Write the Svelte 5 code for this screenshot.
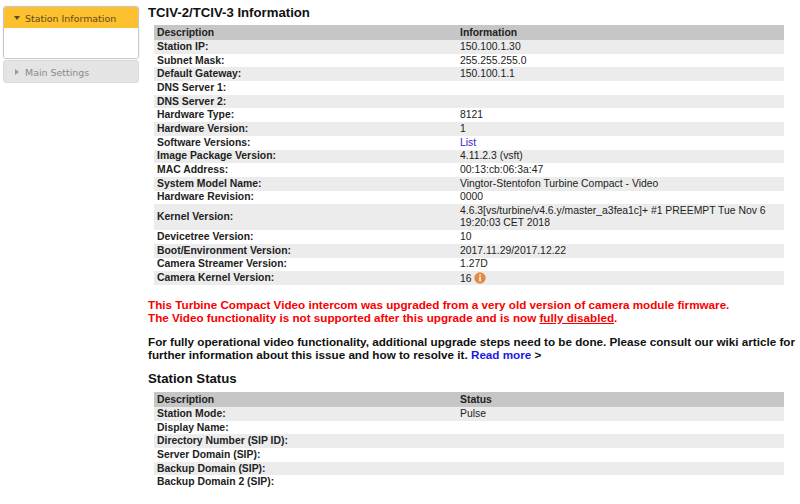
<script>
  const info = [
    ['Station IP:', '150.100.1.30'],
    ['Subnet Mask:', '255.255.255.0'],
    ['Default Gateway:', '150.100.1.1'],
    ['DNS Server 1:', ''],
    ['DNS Server 2:', ''],
    ['Hardware Type:', '8121'],
    ['Hardware Version:', '1'],
    ['Software Versions:', 'List'],
    ['Image Package Version:', '4.11.2.3 (vsft)'],
    ['MAC Address:', '00:13:cb:06:3a:47'],
    ['System Model Name:', 'Vingtor-Stentofon Turbine Compact - Video'],
    ['Hardware Revision:', '0000'],
    ['Kernel Version:', '4.6.3[vs/turbine/v4.6.y/master_a3fea1c]+ #1 PREEMPT Tue Nov 6 19:20:03 CET 2018'],
    ['Devicetree Version:', '10'],
    ['Boot/Environment Version:', '2017.11.29/2017.12.22'],
    ['Camera Streamer Version:', '1.27D'],
    ['Camera Kernel Version:', '16']
  ];
  const status = [
    ['Station Mode:', 'Pulse'],
    ['Display Name:', ''],
    ['Directory Number (SIP ID):', ''],
    ['Server Domain (SIP):', ''],
    ['Backup Domain (SIP):', ''],
    ['Backup Domain 2 (SIP):', '']
  ];
</script>

<div class="page">
  <aside class="side">
    <div class="panel">
      <div class="head active"><span class="tri down"></span>Station Information</div>
      <div class="body"></div>
    </div>
    <div class="head closed"><span class="tri right"></span>Main Settings</div>
  </aside>
  <main class="main">
    <h2>TCIV-2/TCIV-3 Information</h2>
    <table>
      <thead><tr><th class="c1">Description</th><th>Information</th></tr></thead>
      <tbody>
        {#each info as [k, v]}
          <tr>
            <td class="k">{k}</td>
            <td>
              {#if v === 'List'}<a href="#list" class="list">List</a>
              {:else}{v}{/if}
              {#if k === 'Camera Kernel Version:'}
                <svg class="warn" width="12" height="12" viewBox="0 0 12 12">
                  <circle cx="6" cy="6" r="5.7" fill="#e08a45"/>
                  <rect x="5.3" y="2.3" width="1.5" height="1.5" fill="#fff"/>
                  <rect x="5.3" y="4.8" width="1.5" height="4.6" fill="#fff"/>
                </svg>
              {/if}
            </td>
          </tr>
        {/each}
      </tbody>
    </table>
    <p class="alert">This Turbine Compact Video intercom was upgraded from a very old version of camera module firmware.<br>The Video functionality is not supported after this upgrade and is now <u>fully disabled</u>.</p>
    <p class="note">For fully operational video functionality, additional upgrade steps need to be done. Please consult our wiki article for further information about this issue and how to resolve it. <a href="#more">Read more</a> &gt;</p>
    <h2 class="h2b">Station Status</h2>
    <table>
      <thead><tr><th class="c1">Description</th><th>Status</th></tr></thead>
      <tbody>
        {#each status as [k, v]}
          <tr><td class="k">{k}</td><td>{v}</td></tr>
        {/each}
      </tbody>
    </table>
  </main>
</div>

<style>
  :global(body) { margin: 0; background: #fff; overflow: hidden; }
  .page {
    display: flex;
    width: 800px;
    height: 504px;
    overflow: hidden;
    font-family: "Liberation Sans", Arial, sans-serif;
    color: #1a1a1a;
  }
  .side { width: 136px; margin: 6px 0 0 3px; flex: none; display: flex; flex-direction: column; gap: 1px; }
  .panel { border: 1px solid #c8c8c8; border-radius: 3px; overflow: hidden; box-shadow: 0 0 1px #bbb; }
  .head { height: 21px; display: flex; align-items: center; font: 9.45px "DejaVu Sans", sans-serif; padding: 1px 0 0 10px; gap: 5px; box-sizing: border-box; }
  .active { background: #fdc02f; color: #5f4a1c; }
  .body { height: 30px; background: #fff; }
  .closed { height: 23px; background: #e4e4e4; color: #8a8a8a; border: 1px solid #dadada; border-radius: 3px; padding-left: 11px; gap: 6px; }
  .tri { width: 0; height: 0; display: block; flex: none; }
  .down { border-left: 3px solid transparent; border-right: 3px solid transparent; border-top: 4px solid #5a4a20; }
  .right { border-top: 3px solid transparent; border-bottom: 3px solid transparent; border-left: 4px solid #9a9a9a; }
  .main { margin-left: 9px; width: 650px; flex: none; }
  h2 { margin: 5px 0 4px; font-size: 13.2px; line-height: 16px; font-weight: bold; color: #111; }
  table { margin-left: 6px; width: 630px; border-collapse: collapse; font-size: 10.4px; table-layout: fixed; }
  th { background: #c6c6c6; text-align: left; padding: 0 3px; height: 15px; line-height: 15px; font-weight: bold; color: #222; }
  .c1 { width: 297px; }
  td { padding: 0 3px; height: 13.7px; line-height: 12px; color: #222; }
  .k { font-weight: bold; }
  tbody tr:nth-child(odd) td { background: #ececec; }
  tbody tr:nth-child(13) td { height: 26px; }
  .list { color: #3a22d0; text-decoration: none; }
  .warn { vertical-align: -2px; margin-left: 0; }
  .alert { margin: 13px 0 0; font-size: 11.68px; line-height: 13px; font-weight: bold; color: #f80000; }
  .note { margin: 11px 0 0; font-size: 11.68px; line-height: 13px; font-weight: bold; color: #111; }
  .note a { color: #1a1ae0; text-decoration: none; }
  .h2b { margin: 10px 0 5px; }
</style>
